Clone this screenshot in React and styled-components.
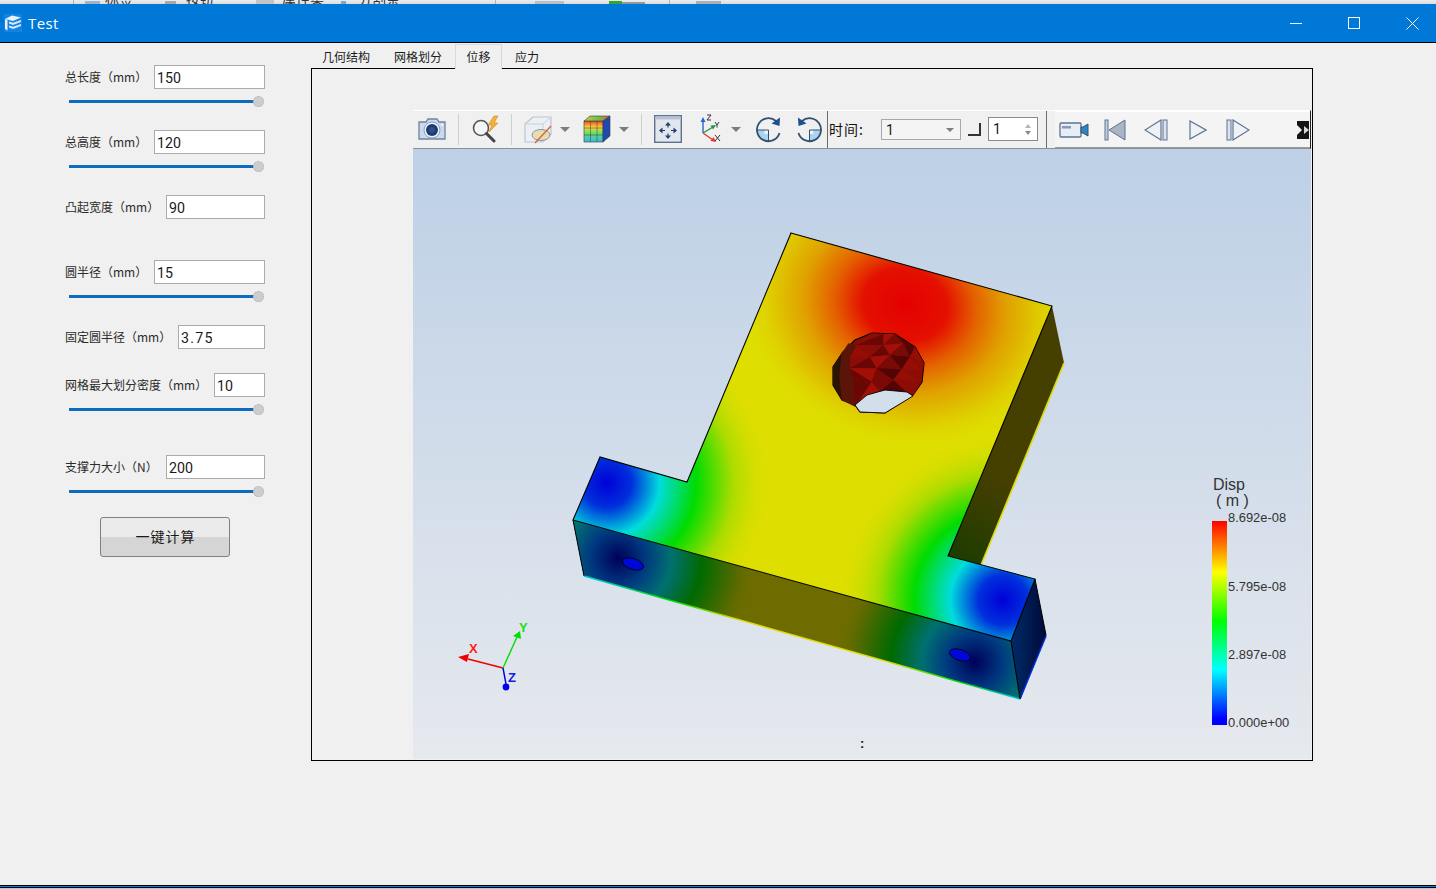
import React from 'react';
import styled, { createGlobalStyle } from 'styled-components';

const Global = createGlobalStyle`
  html, body { margin: 0; padding: 0; background: #f0f0f0; }
  * { box-sizing: border-box; }
`;

const CJK = `"Noto Sans CJK SC", "Noto Sans", sans-serif`;

const Page = styled.div`
  width: 1436px;
  height: 889px;
  display: flex;
  flex-direction: column;
  overflow: hidden;
  background: #f0f0f0;
  font-family: ${CJK};
  color: #1a1a1a;
`;

/* window behind, only its lower edge peeks out */
const BehindStrip = styled.div`
  height: 4px;
  flex: none;
  display: flex;
  align-items: flex-end;
  overflow: hidden;
  background: linear-gradient(#ededed, #dcdcdc);
`;

const BehindText = styled.span`
  flex: none;
  width: ${({ w }) => w}px;
  margin-left: ${({ ml }) => ml}px;
  font-size: 14px;
  line-height: 14px;
  margin-bottom: -1px;
  height: 4px;
  display: flex;
  align-items: flex-end;
  white-space: nowrap;
  color: #333;
`;

const BehindMark = styled.span`
  flex: none;
  width: ${({ w }) => w}px;
  margin-left: ${({ ml }) => ml}px;
  height: ${({ h }) => h || 3}px;
  background: ${({ color }) => color};
`;

const TitleBar = styled.div`
  height: 39px;
  flex: none;
  display: flex;
  align-items: center;
  background: #0078d7;
  border-bottom: 1px solid #000;
  padding: 0 0 0 4px;
  color: #fff;
`;

const AppTitle = styled.span`
  margin-left: 6px;
  font-family: "Open Sans", sans-serif;
  font-size: 15px;
  letter-spacing: 0.4px;
  flex: 1;
`;

const WinButton = styled.div`
  width: 58.6px;
  height: 38px;
  padding-left: 12.5px;
  display: flex;
  align-items: center;
  justify-content: center;
`;

const Body = styled.div`
  flex: 1;
  display: flex;
  min-height: 0;
`;

const Sidebar = styled.div`
  width: 311px;
  flex: none;
  padding: 22px 46px 0 65px;
  display: flex;
  flex-direction: column;
`;

const FieldRow = styled.div`
  display: flex;
  align-items: center;
  justify-content: space-between;
  height: 24px;
  flex: none;
  margin-top: ${({ gap }) => gap || 0}px;
`;

const FieldLabel = styled.label`
  font-size: 12px;
  color: #2a2a2a;
  white-space: nowrap;
  padding-bottom: 2px;
`;

const FieldInput = styled.div`
  width: ${({ w }) => w}px;
  height: 24px;
  background: #fff;
  border: 1px solid #ababab;
  padding-left: 2px;
  font-family: Roboto, sans-serif;
  font-size: 14.2px;
  letter-spacing: ${({ spread }) => spread || 0}px;
  line-height: 24px;
  color: #1a1a1a;
`;

const SliderRow = styled.div`
  display: flex;
  align-items: center;
  height: 11px;
  margin-top: 7px;
  padding: 0 1px 0 4px;
  flex: none;
`;

const SliderTrack = styled.div`
  flex: 1;
  height: 3px;
  background: #0d6cbc;
`;

const SliderKnob = styled.div`
  width: 11px;
  height: 11px;
  flex: none;
  margin-left: -1px;
  border-radius: 50%;
  background: #cdcdcd;
  border: 1px dotted #b0b0b0;
`;

const CalcButton = styled.div`
  width: 130px;
  height: 40px;
  flex: none;
  margin: 20px 0 0 35px;
  padding: 0 0 2px 1px;
  border: 1px solid #808080;
  border-radius: 3px;
  background: linear-gradient(#ebebeb 0 50%, #d5d5d5 50% 100%);
  display: flex;
  align-items: center;
  justify-content: center;
  font-size: 14px;
  letter-spacing: 1px;
  color: #1a1a1a;
`;

const Workspace = styled.div`
  width: 1002px;
  flex: none;
  padding-top: 1px;
  display: flex;
  flex-direction: column;
`;

const TabStrip = styled.div`
  height: 25px;
  flex: none;
  display: flex;
  margin-bottom: -1px;
  position: relative;
  z-index: 1;
`;

const Tab = styled.div`
  width: ${({ w }) => w}px;
  display: flex;
  align-items: center;
  justify-content: center;
  font-size: 12px;
  padding-bottom: 1px;
  color: #1a1a1a;
  ${({ active }) => active && `
    background: #f0f0f0;
    border: 1px solid #d9d9d9;
    border-bottom: none;
    height: 25px;
  `}
`;

const Frame = styled.div`
  width: 1002px;
  height: 693px;
  flex: none;
  border: 1px solid #000;
  background: #f0f0f0;
  display: flex;
  padding: 0 1px 1px 101px;
`;

const Viewer = styled.div`
  flex: 1;
  display: flex;
  flex-direction: column;
  padding-top: 41px;
  min-width: 0;
`;

const Toolbar = styled.div`
  height: 39px;
  flex: none;
  display: flex;
  align-items: center;
  background: #f0f0f0;
  border-top: 1px solid #fff;
  border-bottom: 1px solid #8f8f8f;
  border-right: 1px solid #222;
  padding-bottom: 1px;
`;

const ToolIcon = styled.div`
  flex: none;
  width: ${({ w }) => w}px;
  margin-left: ${({ ml }) => ml || 0}px;
  height: 36px;
  display: flex;
  align-items: center;
  justify-content: center;
`;

const Separator = styled.div`
  flex: none;
  width: 1px;
  height: 31px;
  margin-left: ${({ ml }) => ml || 0}px;
  background: ${({ dark }) => (dark ? '#6b6b6b' : '#cfcfcf')};
  ${({ dark }) => dark && 'height: 37px;'}
`;

const TimeLabel = styled.span`
  flex: none;
  width: 52px;
  margin-left: 1px;
  font-size: 14px;
  letter-spacing: 1px;
  color: #111;
  white-space: nowrap;
`;

const Combo = styled.div`
  flex: none;
  width: 80px;
  height: 21px;
  border: 1px solid #a8a8a8;
  background: #f4f4f4;
  display: flex;
  align-items: center;
  justify-content: space-between;
  padding: 2px 6px 0 4px;
  font-family: Roboto, sans-serif;
  font-size: 14.2px;
`;

const DownCaret = styled.span`
  width: 0;
  height: 0;
  border-left: ${({ s }) => s || 4}px solid transparent;
  border-right: ${({ s }) => s || 4}px solid transparent;
  border-top: ${({ s }) => s || 5}px solid #7d7d7d;
  margin-left: ${({ ml }) => ml || 0}px;
  flex: none;
`;

const CornerMark = styled.div`
  flex: none;
  width: 13px;
  height: 13px;
  margin: 0 0 0 7px;
  border-right: 2px solid #333;
  border-bottom: 2px solid #333;
`;

const Spin = styled.div`
  flex: none;
  width: 50px;
  height: 24px;
  margin-left: 7px;
  border: 1px solid #8a8a8a;
  background: #fff;
  display: flex;
  align-items: center;
  justify-content: space-between;
  padding: 0 6px 0 4px;
  font-family: Roboto, sans-serif;
  font-size: 14.2px;
`;

const SpinArrows = styled.div`
  display: flex;
  flex-direction: column;
  gap: 3px;
`;

const SpinArrow = styled.span`
  width: 0;
  height: 0;
  border-left: 3px solid transparent;
  border-right: 3px solid transparent;
  ${({ up }) => (up ? 'border-bottom: 4px solid #b5b5b5;' : 'border-top: 4px solid #8a8a8a;')}
`;

const PlaybackBar = styled.div`
  flex: 1;
  height: 37px;
  margin: 0 0 -1px 8px;
  background: #f4f4f4;
  border-top: 1px solid #fff;
  border-bottom: 1px solid #9a9a9a;
  display: flex;
  align-items: center;
  min-width: 0;
`;

const Viewport = styled.div`
  flex: 1;
  min-height: 0;
  background: linear-gradient(#bdd0e6, #e6e9ee);
`;

const Scene = styled.svg`
  display: block;
  width: 898px;
  height: 610px;
  font-family: "Liberation Sans", sans-serif;
`;

const BottomEdge = styled.div`
  height: 4px;
  flex: none;
  background: #c4c4c4;
  border-top: 1px solid #000;
  box-shadow: inset 0 1px 0 #0a84e0, inset 0 2px 0 #000;
`;

const fields = [
  { label: '总长度（mm）', value: '150', w: 111, slider: true, gap: 0 },
  { label: '总高度（mm）', value: '120', w: 111, slider: true, gap: 23 },
  { label: '凸起宽度（mm）', value: '90', w: 99, gap: 23 },
  { label: '圆半径（mm）', value: '15', w: 111, slider: true, gap: 41 },
  { label: '固定圆半径（mm）', value: '3.75', w: 87, gap: 23, spread: 1.3 },
  { label: '网格最大划分密度（mm）', value: '10', w: 51, slider: true, gap: 24 },
  { label: '支撑力大小（N）', value: '200', w: 99, slider: true, gap: 40 },
];

const AppIcon = () => (
  <svg width="18" height="18" viewBox="0 0 18 18">
    <rect width="18" height="18" fill="#1482e0" />
    <path d="M1 5 L8 1.5 L17 3.5 L9 7 Z" fill="#e6f1fb" />
    <path d="M1 5 L3.5 6 V16.5 L1 15 Z" fill="#e6f1fb" />
    <path d="M5 7.5 L9 8.8 L17 6 V8 L9 11 L5 9.6 Z" fill="#d6e8f8" />
    <path d="M5 11.5 L9 12.8 L17 10 V12 L9 15 L5 13.6 Z" fill="#d6e8f8" />
  </svg>
);

const CameraIcon = () => (
  <svg width="28" height="24" viewBox="0 0 28 24">
    <path d="M1 5 H8 L10 2 H19 L21 5 H27 V22 H1 Z" fill="#c9daee" stroke="#6f829c" strokeWidth="1.3" />
    <circle cx="14" cy="13" r="8" fill="#eef3f9" stroke="#8ea0b6" />
    <circle cx="14" cy="13" r="6" fill="#1d3a72" />
    <circle cx="14" cy="13" r="3" fill="#2e4f8f" />
    <circle cx="24" cy="8" r="1" fill="#fff" />
  </svg>
);

const ZoomIcon = () => (
  <svg width="30" height="28" viewBox="0 0 30 28">
    <circle cx="11" cy="13" r="7.5" fill="#f3f6f9" stroke="#555" strokeWidth="1.6" />
    <path d="M16.5 18.5 L24 26" stroke="#444" strokeWidth="3" strokeLinecap="round" />
    <path d="M24 1 L18 10 L22 10 L19 17 L28 8 L24 8 L28 1 Z" fill="#f4b23c" stroke="#c98a1e" strokeWidth=".6" />
  </svg>
);

const SectionIcon = () => (
  <svg width="30" height="30" viewBox="0 0 30 30">
    <path d="M2 10 L10 3 H28 V20 L20 28 H2 Z" fill="#eceff3" stroke="#bcc5d2" strokeWidth="1.2" />
    <path d="M2 10 H20 V28 M20 10 L28 3" fill="none" stroke="#c9d0da" strokeWidth="1" />
    <ellipse cx="18" cy="21" rx="9" ry="5.5" fill="#e8dcb0" stroke="#8892a2" />
    <path d="M12 29 L28 12" stroke="#d2683a" strokeWidth="1.4" />
  </svg>
);

const ColorCubeIcon = () => (
  <svg width="28" height="28" viewBox="0 0 28 28">
    <defs>
      <linearGradient id="cubeFront" x1="0" y1="0" x2="0" y2="1">
        <stop offset="0" stopColor="#f0452a" />
        <stop offset=".3" stopColor="#f7d53a" />
        <stop offset=".6" stopColor="#62dc6c" />
        <stop offset="1" stopColor="#39b6ee" />
      </linearGradient>
      <linearGradient id="cubeTop" x1="0" y1="0" x2="1" y2="0">
        <stop offset="0" stopColor="#d9c63a" />
        <stop offset=".5" stopColor="#6cc44f" />
        <stop offset="1" stopColor="#d8643a" />
      </linearGradient>
    </defs>
    <rect x="1" y="6" width="19" height="21" fill="url(#cubeFront)" stroke="#3a3a3a" strokeWidth=".6" />
    <path d="M1 6 L7 1 H27 L20 6 Z" fill="url(#cubeTop)" stroke="#3a3a3a" strokeWidth=".6" />
    <path d="M20 6 L27 1 V21 L20 27 Z" fill="#1f49b0" stroke="#3a3a3a" strokeWidth=".6" />
    <path d="M7.5 6 V27 M14 6 V27 M1 13 H20 M1 20 H20" stroke="#333" strokeWidth=".45" />
  </svg>
);

const FitIcon = () => (
  <svg width="28" height="28" viewBox="0 0 28 28">
    <rect x=".7" y=".7" width="26.6" height="26.6" fill="#e2e7ee" stroke="#5e7391" strokeWidth="1.4" />
    <rect x="1.4" y="1.4" width="25" height="3" fill="#b7c3d3" />
    <path d="M14 7 L11 10.5 H17 Z M14 24 L11 20.5 H17 Z M5 15.5 L8.5 12.5 V18.5 Z M23 15.5 L19.5 12.5 V18.5 Z" fill="#1f3e6e" />
    <path d="M14 10 V12.5 M14 18.5 V21 M8 15.5 H11 M17 15.5 H20" stroke="#1f3e6e" strokeWidth="1.2" />
  </svg>
);

const AxesIcon = () => (
  <svg width="24" height="30" viewBox="0 0 24 30">
    <path d="M5 19 V6" stroke="#2668c9" strokeWidth="1.4" />
    <path d="M5 3 L2.5 8 H7.5 Z" fill="#2668c9" />
    <path d="M5 19 L15 13" stroke="#1d9a45" strokeWidth="1.4" />
    <path d="M18 11 L12.5 11.5 L15 15.5 Z" fill="#1d9a45" />
    <path d="M5 19 L15 26" stroke="#e33" strokeWidth="1.4" />
    <path d="M18 28 L15.5 23 L12.5 27 Z" fill="#e33" />
    <path d="M9 1 H13 L9 6 H13 M17 8 L19 11 L21 8 M19 11 V13.5 M17 21 L22 27 M22 21 L17 27" fill="none" stroke="#333" strokeWidth="1" />
  </svg>
);

const RotateIcon = ({ flip }) => (
  <svg width="27" height="27" viewBox="0 0 27 27" style={flip ? { transform: 'scaleX(-1)' } : undefined}>
    <path d="M13.5 14 H2.5 A11 11 0 0 0 13.5 25 Z" fill="#a9d3f0" />
    <path d="M13.5 14 V18 H9.5 V14 Z" fill="#e8f3fb" />
    <path d="M2 14 H13.5 V25.5" fill="none" stroke="#34506f" strokeWidth="1" />
    <path d="M21 5 A11.5 11.5 0 1 0 24.5 17" fill="none" stroke="#34506f" strokeWidth="1.8" />
    <path d="M25 1.5 L24.5 10 L16.5 7.5 Z" fill="#1e4f8f" />
  </svg>
);

const RecordIcon = () => (
  <svg width="30" height="18" viewBox="0 0 30 18">
    <rect x="1" y="2" width="21" height="14" rx="1" fill="#e7edf4" stroke="#5e7391" strokeWidth="1.3" />
    <rect x="3" y="5" width="9" height="2.5" fill="#8a99ad" />
    <path d="M22 6 H24 L29 3 V15 L24 12 H22 Z" fill="#2f86bd" stroke="#34506f" strokeWidth="1" />
  </svg>
);

const PlaybackIcon = ({ kind }) => {
  const stroke = '#5e7391';
  if (kind === 'first') {
    return (
      <svg width="22" height="22" viewBox="0 0 22 22">
        <rect x="1" y="1" width="3" height="20" fill="#c6d0dc" stroke={stroke} />
        <path d="M21 1 V21 L5 11 Z" fill="#a9b5c4" stroke={stroke} />
      </svg>
    );
  }
  if (kind === 'prev') {
    return (
      <svg width="24" height="22" viewBox="0 0 24 22">
        <path d="M17 1 V21 L1 11 Z" fill="#eef2f6" stroke={stroke} strokeWidth="1.2" />
        <rect x="19" y="1" width="4" height="20" fill="#dbe3ec" stroke={stroke} />
      </svg>
    );
  }
  if (kind === 'play') {
    return (
      <svg width="18" height="20" viewBox="0 0 18 20">
        <path d="M1 1 V19 L17 10 Z" fill="#eef2f6" stroke={stroke} strokeWidth="1.2" />
      </svg>
    );
  }
  return (
    <svg width="24" height="22" viewBox="0 0 24 22">
      <rect x="1" y="1" width="4" height="20" fill="#dbe3ec" stroke={stroke} />
      <path d="M7 1 V21 L23 11 Z" fill="#eef2f6" stroke={stroke} strokeWidth="1.2" />
    </svg>
  );
};

const MoreIcon = () => (
  <svg width="12" height="20" viewBox="0 0 12 20">
    <rect y="1" width="12" height="18" fill="#151515" />
    <path d="M0 5 L5 10 L0 15 Z" fill="#f0f0f0" />
    <path d="M7 6 L12 10 L7 14 Z" fill="#d8d8d8" />
  </svg>
);

/* inner wall of the hole, rows of mesh nodes in 3x picture units */
const wallRows = [
  [[215, 70], [250, 72], [285, 72]],
  [[170, 105], [250, 105], [310, 100], [345, 110]],
  [[150, 140], [210, 140], [270, 135], [330, 140], [372, 160]],
  [[150, 175], [230, 175], [305, 178], [368, 185]],
  [[160, 210], [215, 215], [280, 210], [365, 215]],
  [[165, 290], [240, 245], [320, 245], [340, 255]],
];
const wallTones = ['#8c0c06', '#6a0705', '#a10f07', '#7a0a05', '#520504', '#960d06'];

const wallFacets = () => {
  const out = [];
  for (let r = 0; r < wallRows.length - 1; r++) {
    const a = wallRows[r];
    const b = wallRows[r + 1];
    let i = 0;
    let j = 0;
    while (i < a.length - 1 || j < b.length - 1) {
      const useTop = j >= b.length - 1 || (i < a.length - 1 && a[i + 1][0] <= b[j + 1][0]);
      const third = useTop ? a[++i] : b[++j];
      const first = useTop ? a[i - 1] : a[i];
      const second = useTop ? b[j] : b[j - 1];
      out.push(`${first} ${second} ${third}`);
    }
  }
  return out;
};

const Model = () => (
  <g>
    <defs>
      <radialGradient id="hotSpot" gradientUnits="userSpaceOnUse" cx="905" cy="305" r="170"
        gradientTransform="rotate(15 905 305) translate(905 305) scale(1 .85) translate(-905 -305)">
        <stop offset="0" stopColor="#e40000" />
        <stop offset=".25" stopColor="#e41000" />
        <stop offset=".42" stopColor="#e46000" />
        <stop offset=".6" stopColor="#e0a000" />
        <stop offset=".8" stopColor="#dfcc00" />
        <stop offset="1" stopColor="#dede00" stopOpacity="0" />
      </radialGradient>
      <radialGradient id="coldLeft" gradientUnits="userSpaceOnUse" cx="607" cy="483" r="165">
        <stop offset="0" stopColor="#0000d8" />
        <stop offset=".15" stopColor="#0030dc" />
        <stop offset=".32" stopColor="#00dcdc" />
        <stop offset=".54" stopColor="#00dc00" />
        <stop offset=".76" stopColor="#a8dc00" />
        <stop offset="1" stopColor="#dede00" stopOpacity="0" />
      </radialGradient>
      <radialGradient id="coldRight" gradientUnits="userSpaceOnUse" cx="1003" cy="600" r="165">
        <stop offset="0" stopColor="#0000d8" />
        <stop offset=".15" stopColor="#0030dc" />
        <stop offset=".32" stopColor="#00dcdc" />
        <stop offset=".54" stopColor="#00dc00" />
        <stop offset=".76" stopColor="#a8dc00" />
        <stop offset="1" stopColor="#dede00" stopOpacity="0" />
      </radialGradient>
      <radialGradient id="darkLeft" gradientUnits="userSpaceOnUse" cx="618" cy="558" r="140">
        <stop offset="0" stopColor="#00005a" />
        <stop offset=".2" stopColor="#003a80" />
        <stop offset=".38" stopColor="#007070" />
        <stop offset=".6" stopColor="#006a00" />
        <stop offset=".85" stopColor="#556a00" />
        <stop offset="1" stopColor="#6e6c00" stopOpacity="0" />
      </radialGradient>
      <radialGradient id="darkRight" gradientUnits="userSpaceOnUse" cx="975" cy="662" r="140">
        <stop offset="0" stopColor="#00005a" />
        <stop offset=".2" stopColor="#003a80" />
        <stop offset=".38" stopColor="#007070" />
        <stop offset=".6" stopColor="#006a00" />
        <stop offset=".85" stopColor="#556a00" />
        <stop offset="1" stopColor="#6e6c00" stopOpacity="0" />
      </radialGradient>
      <linearGradient id="rimLine" gradientUnits="userSpaceOnUse" x1="584" y1="576" x2="1020" y2="699">
        <stop offset="0" stopColor="#00c8e0" />
        <stop offset=".2" stopColor="#00d800" />
        <stop offset=".36" stopColor="#dcdc00" />
        <stop offset=".7" stopColor="#dcdc00" />
        <stop offset=".85" stopColor="#00d800" />
        <stop offset="1" stopColor="#00c8e0" />
      </linearGradient>
      <linearGradient id="endFace" gradientUnits="userSpaceOnUse" x1="1012" y1="640" x2="1046" y2="640">
        <stop offset="0" stopColor="#002a6a" />
        <stop offset=".5" stopColor="#001a50" />
        <stop offset="1" stopColor="#000a38" />
      </linearGradient>
      <linearGradient id="sideFace" gradientUnits="userSpaceOnUse" x1="950" y1="560" x2="1000" y2="480">
        <stop offset="0" stopColor="#1c3c00" />
        <stop offset="1" stopColor="#453f00" />
      </linearGradient>
      <clipPath id="topClip">
        <path d="M791 233 L1052 306 L948 556 L1035 579 L1011 641 L573 520 L600 457 L687 482 Z" />
      </clipPath>
      <clipPath id="frontClip">
        <path d="M573 520 L1011 641 L1020 699 L584 576 Z" />
      </clipPath>
    </defs>

    <path d="M1052 306 L1064 363 L981 565 L948 556 Z" fill="url(#sideFace)" />
    <path d="M1064 363 L981 565" stroke="#dcdc00" strokeWidth="1.6" />
    <path d="M1011 641 L1035 579 L1046 635 L1020 699 Z" fill="url(#endFace)" stroke="#000" />
    <path d="M1046 636 L1020 699" stroke="#0030e0" strokeWidth="1.5" />

    <g clipPath="url(#frontClip)">
      <rect x="560" y="510" width="480" height="200" fill="#6e6c00" />
      <rect x="560" y="510" width="480" height="200" fill="url(#darkLeft)" />
      <rect x="560" y="510" width="480" height="200" fill="url(#darkRight)" />
    </g>
    <path d="M584 576 L1020 699" stroke="url(#rimLine)" strokeWidth="1.5" />
    <path d="M573 520 L584 576 M1011 641 L1020 699" stroke="#000" strokeWidth="1" />
    <ellipse cx="633" cy="564" rx="11" ry="5.5" fill="#0008d8" stroke="#000" strokeWidth=".8" transform="rotate(18 633 564)" />
    <ellipse cx="960" cy="655" rx="11" ry="5.5" fill="#0008d8" stroke="#000" strokeWidth=".8" transform="rotate(18 960 655)" />

    <g clipPath="url(#topClip)">
      <rect x="560" y="220" width="510" height="430" fill="#dede00" />
      <rect x="560" y="220" width="510" height="430" fill="url(#hotSpot)" />
      <rect x="560" y="220" width="510" height="430" fill="url(#coldLeft)" />
      <rect x="560" y="220" width="510" height="430" fill="url(#coldRight)" />
    </g>
    <path d="M791 233 L1052 306 L948 556 L1035 579 L1011 641 L573 520 L600 457 L687 482 Z" fill="none" stroke="#000" strokeWidth="1.1" />

    {/* through hole */}
    <path d="M872 333 L895 334 L915 347 L924 363 L922 382 L913 395 L885 413 L860 412 L855 405 L842 400 L833 385 L833 367 L843 352 L855 340 Z" fill="#8a0c06" stroke="#000" strokeWidth="1.2" />
    <g transform="translate(800 310) scale(.3333)">
      {wallFacets().map((points, i) => (
        <polygon key={points} points={points} fill={wallTones[i % wallTones.length]} />
      ))}
      <path d="M145 100 L170 105 L150 140 L150 175 L160 210 L165 290 L125 270 L100 225 L100 170 Z" fill="#5b1408" />
      <path d="M125 130 L100 170 L100 225 L125 270 L118 200 Z" fill="#2a1505" />
    </g>
    <path d="M855 405 L867 395 L885 390 L907 392 L913 396 L885 413 L860 412 Z" fill="#d2deea" stroke="#000" strokeWidth=".9" />
  </g>
);

const Triad = () => (
  <g fontWeight="700" fontSize="13">
    <path d="M503 668 L468 659" stroke="#f00000" strokeWidth="1.4" />
    <path d="M458 657 L469 654 L467 662 Z" fill="#f00000" />
    <path d="M503 668 L517 637" stroke="#00e000" strokeWidth="1.4" />
    <path d="M520 631 L521 639 L513 636 Z" fill="#00e000" />
    <path d="M503 668 L506 684" stroke="#0000e0" strokeWidth="1.4" />
    <circle cx="506" cy="687" r="3.4" fill="#0000f0" />
    <text x="469" y="653" fill="#ff2020">X</text>
    <text x="519" y="632" fill="#20e020">Y</text>
    <text x="508" y="682" fill="#1020e0">Z</text>
  </g>
);

const Legend = () => (
  <g fill="#333">
    <defs>
      <linearGradient id="colorBar" x1="0" y1="0" x2="0" y2="1">
        <stop offset="0" stopColor="#ff0000" />
        <stop offset=".25" stopColor="#ffff00" />
        <stop offset=".49" stopColor="#00ff00" />
        <stop offset=".73" stopColor="#00ffff" />
        <stop offset=".97" stopColor="#0000ff" />
        <stop offset="1" stopColor="#0000ff" />
      </linearGradient>
    </defs>
    <text x="1213" y="490" fontSize="16">Disp</text>
    <text x="1216" y="506" fontSize="16" xmlSpace="preserve">( m )</text>
    <rect x="1212" y="521" width="15" height="204" fill="url(#colorBar)" />
    <text x="1228" y="522" fontSize="12.9">8.692e-08</text>
    <text x="1228" y="591" fontSize="12.9">5.795e-08</text>
    <text x="1228" y="659" fontSize="12.9">2.897e-08</text>
    <text x="1228" y="727" fontSize="12.9">0.000e+00</text>
  </g>
);

export default function App() {
  return (
    <Page>
      <Global />
      <BehindStrip>
        <BehindMark ml={73} w={1} h={4} color="#b5b5b5" />
        <BehindMark ml={11} w={15} color="#9fb4cc" />
        <BehindText ml={5} w={30}>标签</BehindText>
        <BehindMark ml={30} w={11} color="#a8a8a8" />
        <BehindText ml={10} w={30}>按钮</BehindText>
        <BehindMark ml={40} w={18} h={4} color="#c4c4c4" />
        <BehindText ml={8} w={45}>属性集</BehindText>
        <BehindMark ml={14} w={5} color="#7fa8d0" />
        <BehindText ml={12} w={45}>分割条</BehindText>
        <BehindMark ml={92} w={1} h={4} color="#b5b5b5" />
        <BehindMark ml={39} w={29} color="#b8bfc8" />
        <BehindMark ml={45} w={13} color="#2fa82f" />
        <BehindMark ml={0} w={23} h={2} color="#8f98a4" />
        <BehindMark ml={24} w={1} h={4} color="#b5b5b5" />
        <BehindMark ml={26} w={25} color="#a9afb8" />
      </BehindStrip>
      <TitleBar>
        <AppIcon />
        <AppTitle>Test</AppTitle>
        <WinButton>
          <svg width="12" height="12" viewBox="0 0 12 12"><path d="M0 6.5 H12" stroke="#fff" /></svg>
        </WinButton>
        <WinButton>
          <svg width="12" height="12" viewBox="0 0 12 12"><rect x=".5" y=".5" width="11" height="11" fill="none" stroke="#fff" /></svg>
        </WinButton>
        <WinButton>
          <svg width="13" height="13" viewBox="0 0 13 13"><path d="M.5 .5 L12.5 12.5 M12.5 .5 L.5 12.5" stroke="#fff" /></svg>
        </WinButton>
      </TitleBar>
      <Body>
        <Sidebar>
          {fields.map((f) => (
            <React.Fragment key={f.label}>
              <FieldRow gap={f.gap}>
                <FieldLabel>{f.label}</FieldLabel>
                <FieldInput w={f.w} spread={f.spread}>{f.value}</FieldInput>
              </FieldRow>
              {f.slider && (
                <SliderRow>
                  <SliderTrack />
                  <SliderKnob />
                </SliderRow>
              )}
            </React.Fragment>
          ))}
          <CalcButton>一键计算</CalcButton>
        </Sidebar>
        <Workspace>
          <TabStrip>
            <Tab w={70}>几何结构</Tab>
            <Tab w={74}>网格划分</Tab>
            <Tab w={47} active>位移</Tab>
            <Tab w={50}>应力</Tab>
          </TabStrip>
          <Frame>
            <Viewer>
              <Toolbar>
                <ToolIcon w={28} ml={5}><CameraIcon /></ToolIcon>
                <Separator ml={12} />
                <ToolIcon w={30} ml={11}><ZoomIcon /></ToolIcon>
                <Separator ml={11} />
                <ToolIcon w={30} ml={11}><SectionIcon /></ToolIcon>
                <DownCaret ml={7} s={5} />
                <ToolIcon w={28} ml={13}><ColorCubeIcon /></ToolIcon>
                <DownCaret ml={8} s={5} />
                <Separator ml={12} />
                <ToolIcon w={28} ml={12}><FitIcon /></ToolIcon>
                <ToolIcon w={24} ml={16}><AxesIcon /></ToolIcon>
                <DownCaret ml={9} s={5} />
                <ToolIcon w={27} ml={14}><RotateIcon /></ToolIcon>
                <ToolIcon w={27} ml={14}><RotateIcon flip /></ToolIcon>
                <Separator ml={4} dark />
                <TimeLabel>时间:</TimeLabel>
                <Combo>1<DownCaret s={4} /></Combo>
                <CornerMark />
                <Spin>
                  1
                  <SpinArrows>
                    <SpinArrow up />
                    <SpinArrow />
                  </SpinArrows>
                </Spin>
                <Separator ml={8} dark />
                <PlaybackBar>
                  <ToolIcon w={30} ml={4}><RecordIcon /></ToolIcon>
                  <ToolIcon w={22} ml={15}><PlaybackIcon kind="first" /></ToolIcon>
                  <ToolIcon w={24} ml={18}><PlaybackIcon kind="prev" /></ToolIcon>
                  <ToolIcon w={18} ml={21}><PlaybackIcon kind="play" /></ToolIcon>
                  <ToolIcon w={24} ml={19}><PlaybackIcon kind="next" /></ToolIcon>
                  <ToolIcon w={12} ml={47}><MoreIcon /></ToolIcon>
                </PlaybackBar>
              </Toolbar>
              <Viewport>
                <Scene viewBox="413 149 898 610">
                  <Model />
                  <Triad />
                  <Legend />
                  <text x="860" y="748" fontSize="13" fontWeight="700" fill="#111">:</text>
                </Scene>
              </Viewport>
            </Viewer>
          </Frame>
        </Workspace>
      </Body>
      <BottomEdge />
    </Page>
  );
}
